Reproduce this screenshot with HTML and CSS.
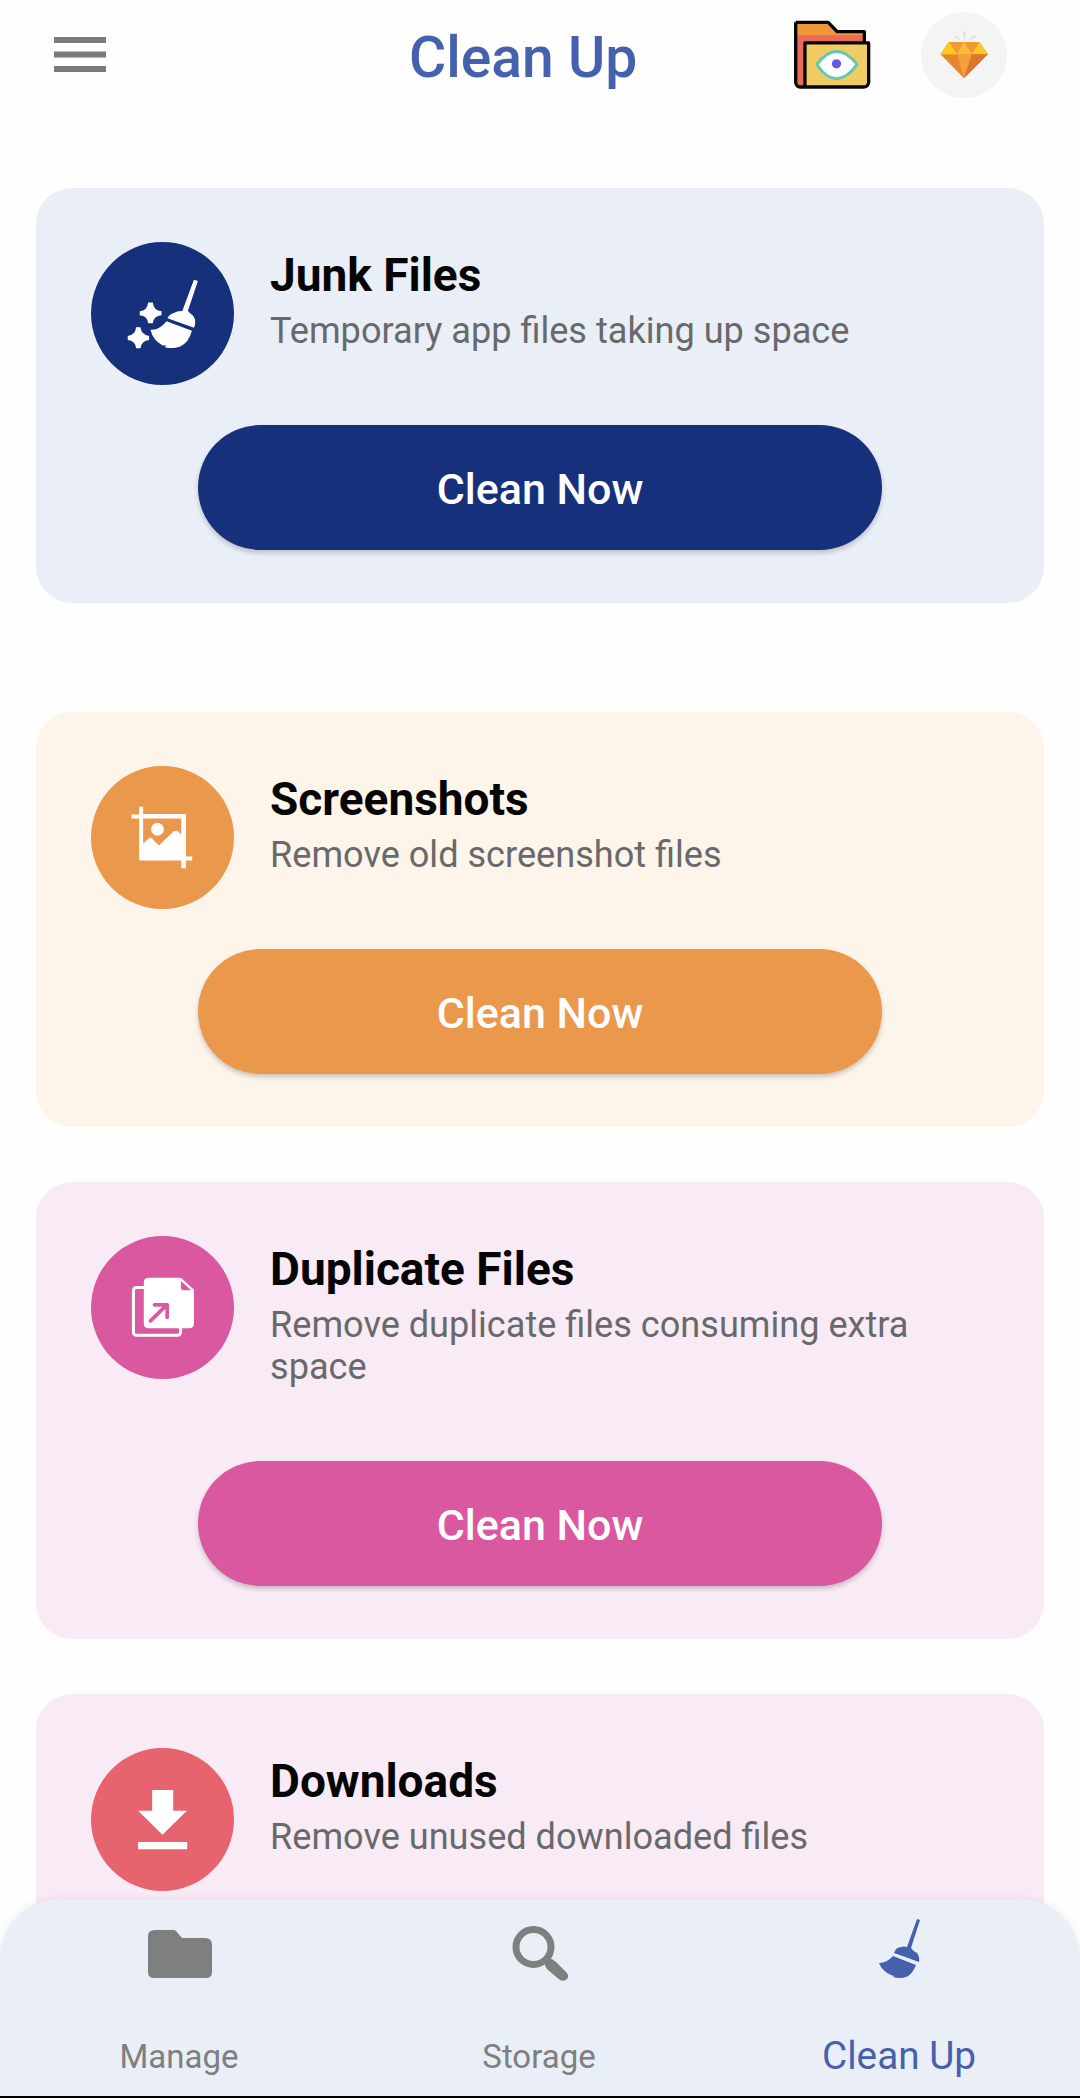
FILE: index.html
```html
<!DOCTYPE html>
<html lang="en">
<head>
<meta charset="utf-8">
<title>Clean Up</title>
<link rel="stylesheet" href="styles.css">
</head>
<body>
<div class="app">
  <header class="topbar">
    <svg class="menu" viewBox="0 0 52 35"><path d="M0 0h52v6H0zM0 14.500h52v6H0zM0 29h52v6H0z" fill="#7b7b7b"/></svg>
    <h1 class="title">Clean Up</h1>
    <svg class="vault" viewBox="102 58 232 208">
      <path d="M107 65h98l27 28h82v40H133v125h-12q-14 0-14-14z" fill="#ef9638"/>
      <path d="M110 104h202v25H134v127h-12q-12-2-12-14z" fill="#ea6a5c"/>
      <path d="M135 127h192v119q-2 14-16 14H135z" fill="#f0cc63"/>
      <path d="M107 65h98l27 28h82v34M107 65v181q2 14 14 14h190q14 0 16-14V127H135v130" fill="none" stroke="#050505" stroke-width="10" stroke-linejoin="round"/>
      <path d="M171 192q29-39 59-39 32 0 62 39-30 43-62 43-31 0-59-43z" fill="#fff" stroke="#64c8b6" stroke-width="9" stroke-linejoin="round"/>
      <circle cx="230" cy="190" r="14" fill="#625de0"/>
    </svg>
    <svg class="premium" viewBox="486 37 256 256">
      <circle cx="614" cy="165" r="128" fill="#f4f4f4"/>
      <path d="M611 94h9l-2 24h-5zM585 110l6-4 11 12-4 2zM646 105l5 7-20 8-3-2z" fill="#e2e3e3"/>
      <path d="M569 126h91l25 37-71 71-70-71z" fill="#e9852f"/>
      <path d="M569 126h91l25 37H544z" fill="#f6b52b"/>
      <path d="M544 163l25-37 25 37zM685 163l-25-37-23 37z" fill="#fbc91f"/>
      <path d="M569 126h45l-20 37zM614 126h46l-23 37z" fill="#ef9b31"/>
      <path d="M594 163l20-37 23 37z" fill="#f9bd38"/>
      <path d="M594 163h43l-23 71z" fill="#f4a13d"/>
      <path d="M637 163h48l-71 71z" fill="#dc762f"/>
    </svg>
  </header>

  <main class="list">
    <section class="card junk">
      <div class="head">
        <svg class="badge" viewBox="33 36 428 428">
          <circle cx="247" cy="250" r="214" fill="#17307c"/>
          <g fill="#fff">
            <path d="M341 149l12 4-30 89q5 8 15 14 8 9 7 22 0 8-4 15l-79-29q5-12 17-15 14-7 27-6z"/>
            <path d="M259 273l76 29q-9 35-35 47-22 8-46 2l4-6-11 1q-29-16-36-47 28 0 48-26z"/>
            <path d="M204 217h14q2 24 26 26v12q-24 2-26 24h-14q-2-22-25-24v-12q23-2 25-26zM168 291h13q3 23 26 26v12q-23 2-26 25h-13q-2-23-25-25v-12q23-3 25-26z"/>
          </g>
        </svg>
        <div class="copy"><h2>Junk Files</h2><p>Temporary app files taking up space</p></div>
      </div>
      <button class="action">Clean Now</button>
    </section>

    <section class="card shots">
      <div class="head">
        <svg class="badge" viewBox="33 33 428 428">
          <circle cx="247" cy="247" r="214" fill="#ea984b"/>
          <g fill="#fff">
            <path fill-rule="evenodd" d="M177 155h12v22h128v127h19v12h-19v23h-14v-23H177V190h-23v-12h23zM189 190v75l17-15q5-4 10 0l20 21 44-42q7-4 14 0l9 9v-48z"/>
            <circle cx="232" cy="222" r="19"/>
          </g>
        </svg>
        <div class="copy"><h2>Screenshots</h2><p>Remove old screenshot files</p></div>
      </div>
      <button class="action">Clean Now</button>
    </section>

    <section class="card dupes">
      <div class="head">
        <svg class="badge" viewBox="33 33 428 428">
          <circle cx="247" cy="247" r="214" fill="#d9589f"/>
          <rect x="160" y="187" width="141" height="143" rx="9" fill="none" stroke="#fff" stroke-width="9"/>
          <path d="M205 158h95l41 38v99q0 14-14 14H205q-14 0-14-14V172q0-14 14-14z" fill="#fff"/>
          <path d="M302 168v20q0 7 7 7h24z" fill="#d9589f"/>
          <path d="M302 160l39 36" stroke="#fff" stroke-width="3"/>
          <path d="M211 287l49-48M223 239h38v37" fill="none" stroke="#d9589f" stroke-width="11" stroke-linecap="round" stroke-linejoin="round"/>
        </svg>
        <div class="copy"><h2>Duplicate Files</h2><p>Remove duplicate files consuming extra<br>space</p></div>
      </div>
      <button class="action">Clean Now</button>
    </section>

    <section class="card downloads">
      <div class="head">
        <svg class="badge" viewBox="33 39 428 428">
          <circle cx="247" cy="253" r="214" fill="#e7636d"/>
          <path d="M216 165h63v62h41l-73 72-73-72h42zM174 320h147v22H174z" fill="#fff"/>
        </svg>
        <div class="copy"><h2>Downloads</h2><p>Remove unused downloaded files</p></div>
      </div>
    </section>
  </main>

  <nav class="tabs">
    <a class="tab manage">
      <svg class="icon" viewBox="0 0 64 64"><path d="M7 7h19q1 0 2 1l6 7h23q7 0 7 7v27q0 6-6 6H6q-6 0-6-6V13q0-6 7-6z" fill="#7e7f7f"/></svg>
      <span>Manage</span>
    </a>
    <a class="tab storage">
      <svg class="icon" viewBox="0 0 64 64"><circle cx="25.500" cy="24" r="17.500" fill="none" stroke="#7e7f7f" stroke-width="7"/><path d="M36 39l4-4q5 1 8 4l10 10q4 4 1 7-3 3-7 1L40 47q-3-3-4-8z" fill="#7e7f7f"/></svg>
      <span>Storage</span>
    </a>
    <a class="tab cleanup">
      <svg class="icon" viewBox="0 0 64 64"><g fill="#4560ac"><path d="M49 -4l3 1-9 28q2 3 6 5 3 4 2 9L26 30q2-6 7-6 3-1 6 0z"/><path d="M25 33l23 9q-4 10-10 12-6 2-13 0l1-1-3-1Q14 48 11 40q8 0 14-7z"/></g></svg>
      <span>Clean Up</span>
    </a>
  </nav>
</div>
</body>
</html>
```
FILE: styles.css
```css
* { box-sizing: border-box; margin: 0; padding: 0; }

body {
  background: #fefefe;
  font-family: Roboto, "Liberation Sans", sans-serif;
  color: #050505;
}

.app {
  height: 2098px;
  overflow: hidden;
  display: flex;
  flex-direction: column;
}

.topbar {
  flex: none;
  height: 188px;
  padding: 0 73px 0 54px;
  display: flex;
  align-items: flex-start;
}
.menu { width: 52px; height: 35px; margin-top: 37px; }
.title {
  margin-left: 303px;
  margin-top: 24px;
  width: 230px;
  font-size: 57px;
  line-height: 68px;
  font-weight: 500;
  white-space: nowrap;
  color: #4560ac;
}
.vault { width: 77px; height: 69px; margin-left: 155px; margin-top: 20px; }
.premium { width: 86px; height: 86px; margin-left: auto; margin-top: 12px; }

.list {
  flex: 1;
  min-height: 0;
  overflow: hidden;
  padding: 0 36px;
}

.card {
  border-radius: 36px;
  padding: 54px 55px 53px;
  margin-bottom: 55px;
}
.junk { background: #eaeef7; margin-bottom: 109px; }
.shots { background: #fdf4ea; }
.dupes, .downloads { background: #f9ebf5; }
.downloads { height: 260px; }

.head { display: flex; min-height: 143px; }
.dupes .head { height: 185px; }
.badge { flex: none; width: 143px; height: 143px; }
.copy { margin-left: 36px; padding-top: 6px; white-space: nowrap; }
.copy h2 { font-size: 46px; line-height: 54px; font-weight: 700; }
.copy p { font-size: 36.12px; line-height: 42px; color: #68696b; margin-top: 8px; }

.action {
  display: block;
  width: 684px;
  height: 125px;
  margin: 40px auto 0;
  padding-top: 3px;
  border: 0;
  border-radius: 63px;
  font: 500 43px/122px Roboto, "Liberation Sans", sans-serif;
  color: #fff;
  box-shadow: 0 3px 5px rgba(0, 0, 0, .2);
}
.junk .action { background: #17307c; }
.shots .action { background: #ea984b; }
.dupes .action { background: #d9589f; }

.tabs {
  flex: none;
  position: relative;
  height: 199px;
  margin-top: -60px;
  border-radius: 60px 60px 0 0;
  background: #eaeef7;
  box-shadow: 0 0 8px rgba(0, 0, 0, .08);
  display: grid;
  grid-template-columns: repeat(3, 1fr);
  overflow: hidden;
}
.tab {
  display: flex;
  flex-direction: column;
  align-items: center;
  justify-content: space-between;
  padding: 24px 0 19px;
  border-bottom: 2px solid #000;
  font-size: 33px;
  line-height: 40px;
  color: #7e7f7f;
}
.tab span { margin-left: -2px; }
.icon { width: 64px; height: 64px; overflow: visible; }
.cleanup { font-size: 38.7px; color: #4560ac; padding-bottom: 20px; }
```
